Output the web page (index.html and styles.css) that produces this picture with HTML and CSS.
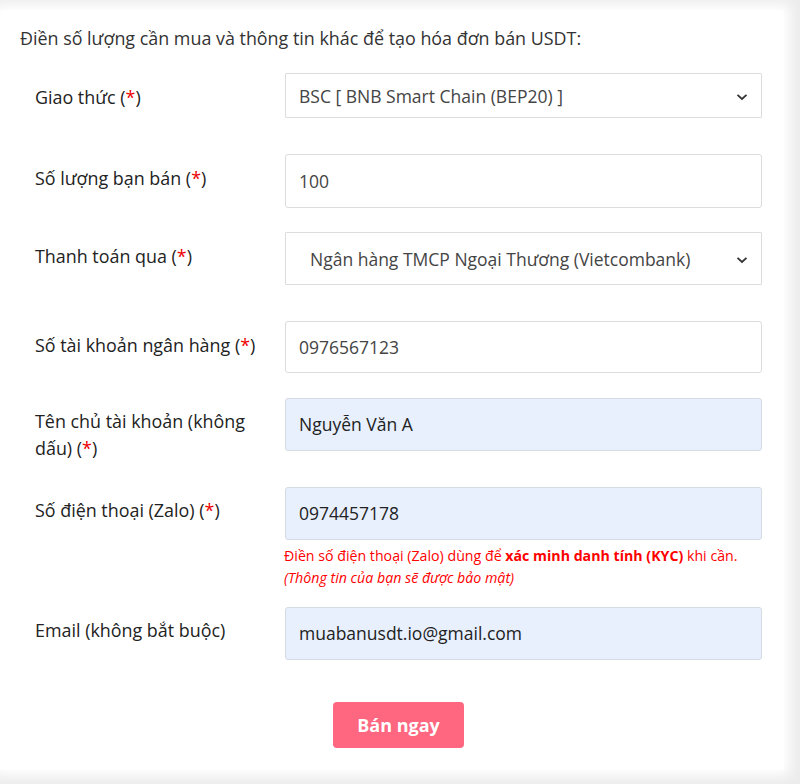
FILE: index.html
```html
<!DOCTYPE html>
<html lang="vi">
<head>
<meta charset="utf-8">
<title>Bán USDT</title>
<link rel="stylesheet" href="styles.css">
</head>
<body>
<div class="page">
  <div class="card">
    <p class="intro">Điền số lượng cần mua và thông tin khác để tạo hóa đơn bán USDT:</p>

    <div class="row row--first">
      <div class="label">Giao thức (<span class="req">*</span>)</div>
      <div class="field field--select field--short">
        <span class="value">BSC [ BNB Smart Chain (BEP20) ]</span>
        <svg class="chevron" width="12" height="8" viewBox="0 0 12 8"><path d="M1.5 1.8 L6 6 L10.5 1.8" fill="none" stroke="#333" stroke-width="1.8"/></svg>
      </div>
    </div>

    <div class="row row--wide">
      <div class="label">Số lượng bạn bán (<span class="req">*</span>)</div>
      <div class="field field--tall"><span class="value">100</span></div>
    </div>

    <div class="row">
      <div class="label">Thanh toán qua (<span class="req">*</span>)</div>
      <div class="field field--select">
        <span class="value value--indent">Ngân hàng TMCP Ngoại Thương (Vietcombank)</span>
        <svg class="chevron" width="12" height="8" viewBox="0 0 12 8"><path d="M1.5 1.8 L6 6 L10.5 1.8" fill="none" stroke="#333" stroke-width="1.8"/></svg>
      </div>
    </div>

    <div class="row row--wide">
      <div class="label">Số tài khoản ngân hàng (<span class="req">*</span>)</div>
      <div class="field field--mid"><span class="value">0976567123</span></div>
    </div>

    <div class="row row--mid">
      <div class="label">Tên chủ tài khoản (không<br>dấu) (<span class="req">*</span>)</div>
      <div class="field field--filled"><span class="value value--dark">Nguyễn Văn A</span></div>
    </div>

    <div class="row row--mid">
      <div class="label">Số điện thoại (Zalo) (<span class="req">*</span>)</div>
      <div class="control">
        <div class="field field--filled"><span class="value value--dark">0974457178</span></div>
        <p class="help">Điền số điện thoại (Zalo) dùng để <b>xác minh danh tính (KYC)</b> khi cần.<br><i>(Thông tin của bạn sẽ được bảo mật)</i></p>
      </div>
    </div>

    <div class="row row--tight">
      <div class="label">Email (không bắt buộc)</div>
      <div class="field field--filled"><span class="value value--dark">muabanusdt.io@gmail.com</span></div>
    </div>

    <div class="actions">
      <div class="btn">Bán ngay</div>
    </div>
  </div>
</div>
</body>
</html>
```

FILE: styles.css
```css
* { box-sizing: border-box; }

html, body {
  margin: 0;
  padding: 0;
}

body {
  background: #ececec;
  font-family: "Open Sans", "Liberation Sans", sans-serif;
  color: #222;
  width: 800px;
  height: 784px;
  overflow: hidden;
}

.page {
  padding: 10px 16px 14px 0;
  height: 784px;
}

.card {
  background: #fff;
  box-shadow: 0 0 12px 6px #fff;
  height: 760px;
  padding: 16px 7px 0 20px;
}

.intro {
  margin: 0;
  font-size: 17.9px;
  line-height: 24px;
  color: #333;
}

.row {
  display: flex;
  align-items: flex-start;
  margin: 24px 0 0 15px;
  width: 727px;
}

.row--first { margin-top: 23px; }
.row--wide { margin-top: 36px; }
.row--mid { margin-top: 24.5px; }
.row--tight { margin-top: 18px; }

.label {
  width: 250px;
  flex: none;
  padding: 10.5px 14px 0 0;
  font-size: 17.9px;
  line-height: 27px;
  color: #222;
}

.req { color: #e00; }

.control {
  flex: 1;
  display: flex;
  flex-direction: column;
}

.field {
  flex: 1;
  height: 53px;
  border: 1px solid #dcdcdc;
  border-radius: 3px;
  background: #fff;
  display: flex;
  align-items: center;
  padding: 0 14px 0 13px;
  position: relative;
}

.control .field { flex: none; }

.field--short { height: 45px; border-radius: 1px; }
.field--tall { height: 54px; }
.field--mid { height: 52px; }
.field--select { border-radius: 1px; }

.field--filled {
  background: #e8f0fe;
  border-color: #d6dbe3;
}

.value {
  font-size: 17.5px;
  color: #444;
  white-space: nowrap;
}

.value--indent { padding-left: 11px; }
.value--dark { color: #222; }

.chevron {
  position: absolute;
  right: 13px;
  top: 50%;
  margin-top: -3px;
}

.help {
  margin: 5px 0 0 -1px;
  font-size: 14.2px;
  line-height: 22px;
  color: #f00;
}

.help b { font-weight: 700; }

.actions {
  display: flex;
  justify-content: center;
  margin-top: 42px;
}

.btn {
  width: 131px;
  height: 46px;
  background: #ff6680;
  border-radius: 4px;
  color: #fff;
  font-size: 18px;
  font-weight: 700;
  display: flex;
  align-items: center;
  justify-content: center;
}
```
